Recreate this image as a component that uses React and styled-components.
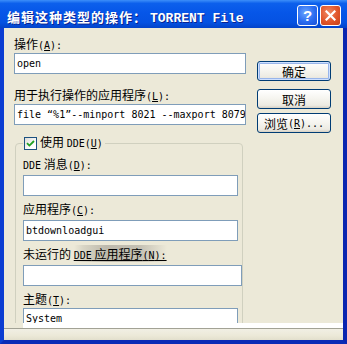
import React from "react"
import styled, { createGlobalStyle } from "styled-components"

const GlobalStyle = createGlobalStyle`
    html, body {
        margin: 0;
        padding: 0;
        background: #ece9d8;
    }
    body {
        width: 347px;
        height: 344px;
        overflow: hidden;
    }
`

const CJK = `"Noto Sans CJK SC", "Noto Sans", sans-serif`
const MONO = `"DejaVu Sans Mono", "Liberation Mono", monospace`

/*
    WINDOW FRAME
*/

const Window = styled.div`
    width: 347px;
    height: 344px;
    display: flex;
    flex-direction: column;
`
const TitleBar = styled.div`
    height: 28px;
    flex-shrink: 0;
    display: flex;
    align-items: center;
    padding: 0 6px 0 7px;
    box-sizing: border-box;
    background: linear-gradient(180deg, #3d8ff9 0%, #0c60ec 12%, #0656e8 45%, #0552e2 80%, #0343c9 100%);
`
const Title = styled.div`
    flex: 1;
    padding-top: 4px;
    color: #fff;
    font-family: ${CJK};
    font-size: 13px;
    font-weight: 700;
    letter-spacing: 1px;
    white-space: nowrap;
    text-shadow: 1px 1px 0 #0a2390;
`
const TitleMono = styled.span`
    font-family: "Liberation Mono", monospace;
    font-weight: 700;
    letter-spacing: 0;
    margin-left: 3px;
`
const Controls = styled.div`
    display: flex;
    gap: 2px;
    margin-top: 3px;
`
const CtrlButton = styled.div`
    width: 21px;
    height: 21px;
    box-sizing: border-box;
    border: 1px solid #fff;
    border-radius: 3px;
    display: flex;
    align-items: center;
    justify-content: center;
    color: #fff;
    font-family: "Liberation Sans", sans-serif;
    font-weight: 700;
    font-size: 15px;
    background: ${(p) =>
        p.$close
            ? "radial-gradient(circle at 40% 35%, #f08a64 0%, #e0552a 55%, #c5401a 100%)"
            : "radial-gradient(circle at 40% 35%, #6aa6ff 0%, #2a6cf0 55%, #1a4fd6 100%)"};
`
const Frame = styled.div`
    flex: 1;
    display: flex;
    flex-direction: column;
    border-left: 4px solid #0b3dd2;
    border-right: 4px solid #0a25b0;
    border-bottom: 4px solid #0a2bb6;
    background: #ece9d8;
`

/*
    DIALOG BODY
*/

const Body = styled.div`
    height: 295px;
    flex-shrink: 0;
    overflow: hidden;
    display: flex;
    gap: 11px;
    padding: 9px 0 0 10px;
    box-sizing: border-box;
`
const LeftCol = styled.div`
    width: 232px;
    display: flex;
    flex-direction: column;
`
const RightCol = styled.div`
    width: 74px;
    display: flex;
    flex-direction: column;
    padding-top: 24px;
`
const Field = styled.div`
    display: flex;
    flex-direction: column;
    gap: ${(p) => p.$gap || 2}px;
    margin-top: ${(p) => p.$top || 0}px;
`
const Label = styled.div`
    height: 14px;
    line-height: 14px;
    font-family: ${CJK};
    font-size: 12px;
    color: #000;
    white-space: nowrap;
`
const Mono = styled.span`
    font-family: ${MONO};
    font-size: 10px;
`
const Marked = styled.span`
    text-decoration: underline;
    background: linear-gradient(90deg, rgba(180, 176, 162, 0) 0%, rgba(180, 176, 162, 0.35) 10%, #bdb9ac 35%, #c4c0b3 70%, rgba(200, 196, 184, 0) 100%);
`
const TextBox = styled.div`
    height: 21px;
    box-sizing: border-box;
    border: 1px solid #7f9db9;
    background: #fff;
    padding: 0 2px;
    line-height: 19px;
    font-family: ${MONO};
    font-size: 10px;
    color: #000;
    white-space: nowrap;
    overflow: hidden;
    margin-right: ${(p) => (p.$wide ? -4 : 0)}px;
`
const Button = styled.div`
    height: 20px;
    margin-top: ${(p) => p.$top || 0}px;
    box-sizing: border-box;
    border: 1px solid #003c74;
    border-radius: 3px;
    display: flex;
    align-items: center;
    justify-content: center;
    font-family: ${CJK};
    font-size: 12px;
    color: #000;
    white-space: nowrap;
    background: linear-gradient(180deg, #ffffff 0%, #f6f5f0 45%, #eceae2 85%, #d6d0c3 100%);
    box-shadow: ${(p) => (p.$default ? "inset 0 0 0 1px #cee0ff, inset 0 0 0 2px #98b5ea" : "none")};
`

/*
    DDE GROUP
*/

const Group = styled.fieldset`
    margin: 11px 0 0 1px;
    width: 228px;
    min-width: 0;
    box-sizing: border-box;
    border: 1px solid #d0d0bf;
    border-radius: 4px;
    padding: 7px 4px 12px 7px;
    display: flex;
    flex-direction: column;
    gap: 6px;
`
const Legend = styled.legend`
    padding: 0 2px 0 1px;
    height: 14px;
    display: flex;
    align-items: center;
    gap: 3px;
    font-family: ${CJK};
    font-size: 12px;
    line-height: 14px;
    background: #ece9d8;
`
const CheckBox = styled.span`
    width: 13px;
    height: 13px;
    box-sizing: border-box;
    border: 1px solid #1c5180;
    background: linear-gradient(135deg, #dcdcd7 0%, #fff 70%);
    display: flex;
    align-items: center;
    justify-content: center;
`

/*
    BOTTOM EDGE
*/

const Footer = styled.div`
    flex: 1;
    display: flex;
    flex-direction: column;
`
const WhiteBand = styled.div`
    height: 5px;
    margin-left: 19px;
    background: #fff;
`
const Rule = styled.div`
    height: 1px;
    background: #a2a295;
`
const Shelf = styled.div`
    flex: 1;
    background: linear-gradient(180deg, #f1efe4 0%, #ece9d8 60%, #e2dfcd 100%);
`

function Key({ k }) {
    return (
        <Mono>
            (<u>{k}</u>):
        </Mono>
    )
}

export default function App() {
    return (
        <>
            <GlobalStyle />
            <Window>
                <TitleBar>
                    <Title>
                        编辑这种类型的操作：<TitleMono>TORRENT File</TitleMono>
                    </Title>
                    <Controls>
                        <CtrlButton>?</CtrlButton>
                        <CtrlButton $close>
                            <svg width="11" height="11" viewBox="0 0 11 11">
                                <path d="M1.5 1.5 L9.5 9.5 M9.5 1.5 L1.5 9.5" stroke="#fff" strokeWidth="2.2" strokeLinecap="square" />
                            </svg>
                        </CtrlButton>
                    </Controls>
                </TitleBar>
                <Frame>
                    <Body>
                        <LeftCol>
                            <Field>
                                <Label>
                                    操作<Key k="A" />
                                </Label>
                                <TextBox>open</TextBox>
                            </Field>
                            <Field $top={14}>
                                <Label>
                                    用于执行操作的应用程序<Key k="L" />
                                </Label>
                                <TextBox>file “%1”--minport 8021 --maxport 8079</TextBox>
                            </Field>
                            <Group>
                                <Legend>
                                    <CheckBox>
                                        <svg width="9" height="9" viewBox="0 0 9 9">
                                            <path d="M1 4.2 L3.4 6.6 L8 2" fill="none" stroke="#21a121" strokeWidth="1.8" />
                                        </svg>
                                    </CheckBox>
                                    <span>
                                        使用 <Mono>DDE(<u>U</u>)</Mono>
                                    </span>
                                </Legend>
                                <Field $gap={4}>
                                    <Label>
                                        <Mono>DDE</Mono> 消息<Key k="D" />
                                    </Label>
                                    <TextBox />
                                </Field>
                                <Field $gap={4}>
                                    <Label>
                                        应用程序<Key k="C" />
                                    </Label>
                                    <TextBox>btdownloadgui</TextBox>
                                </Field>
                                <Field $gap={4}>
                                    <Label>
                                        未运行的{" "}
                                        <Marked>
                                            <Mono>DDE</Mono> 应用程序<Key k="N" />
                                        </Marked>
                                    </Label>
                                    <TextBox $wide />
                                </Field>
                                <Field $gap={2}>
                                    <Label>
                                        主题<Key k="T" />
                                    </Label>
                                    <TextBox>System</TextBox>
                                </Field>
                            </Group>
                        </LeftCol>
                        <RightCol>
                            <Button $default>确定</Button>
                            <Button $top={8}>取消</Button>
                            <Button $top={4}>
                                浏览<Mono>(<u>R</u>)...</Mono>
                            </Button>
                        </RightCol>
                    </Body>
                    <Footer>
                        <WhiteBand />
                        <Rule />
                        <Shelf />
                    </Footer>
                </Frame>
            </Window>
        </>
    )
}
